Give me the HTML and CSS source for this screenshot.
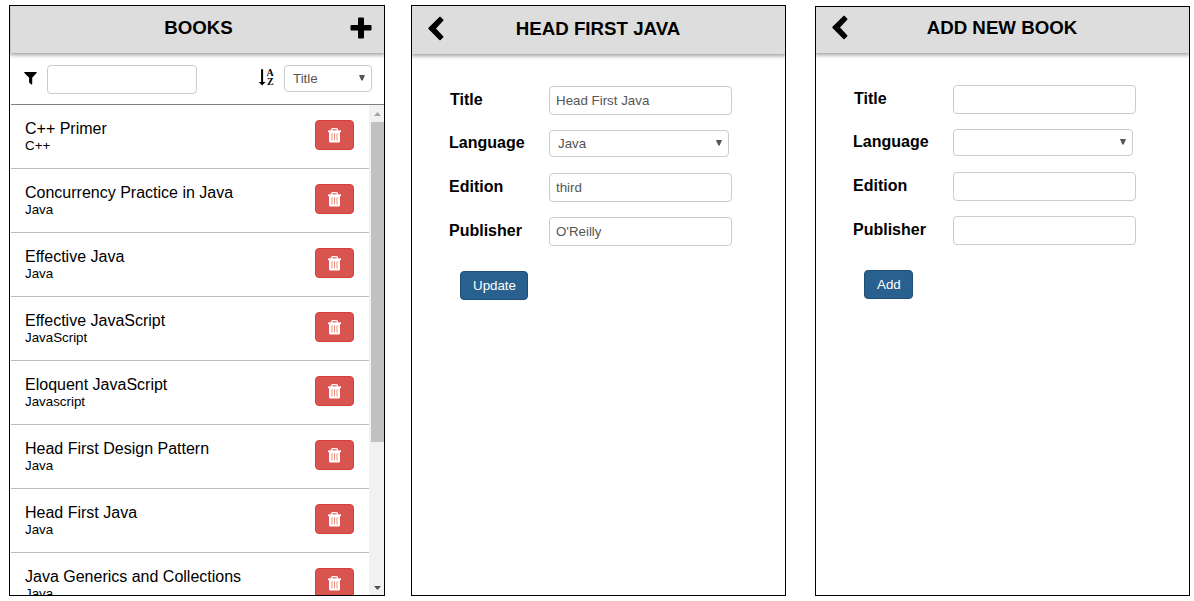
FILE: index.html
```html
<!DOCTYPE html>
<html lang="en">
<head>
<meta charset="utf-8">
<title>Books</title>
<link rel="stylesheet" href="styles.css">
</head>
<body>
<svg class="defs" aria-hidden="true">
  <symbol id="trash" viewBox="0 0 13 15">
    <path d="M3.6 2.6V1.7Q3.6 .7 4.6 .7H8.4Q9.4 .7 9.4 1.7V2.6" fill="none" stroke="#fff" stroke-width="1.3"/>
    <path d="M0 2.3H13V4.2H0z" fill="#fff"/>
    <path d="M1 4H12V13.1Q12 14.6 10.6 14.6H2.4Q1 14.6 1 13.1z" fill="#fff"/>
    <path d="M4 5.2V12.4M6.5 5.2V12.4M9 5.2V12.4" stroke="#e78d7c" stroke-width="1"/>
  </symbol>
  <symbol id="chevron" viewBox="0 0 16 25">
    <path d="M.5 11.8Q0 12.4.5 13L11.4 24Q12 24.6 12.6 24L15.2 21.4Q15.8 20.8 15.2 20.2L8 12.4 15.2 4.7Q15.8 4.1 15.2 3.5L12.6.9Q12 .3 11.4.9z"/>
  </symbol>
  <symbol id="caret" viewBox="0 0 6 6"><path d="M0 0H6L3.7 5.5H2.3z" fill="#555"/></symbol>
</svg>
<main class="screens">
  <section class="phone phone-list">
    <header class="bar">
      <h3 class="bar-title">BOOKS</h3>
      <svg class="plus" viewBox="0 0 22 22"><path d="M8 1.5Q8 .5 9 .5H13Q14 .5 14 1.5V8H20.5Q21.5 8 21.5 9V12.5Q21.5 13.5 20.5 13.5H14V20.5Q14 21.5 13 21.5H9Q8 21.5 8 20.5V13.5H1.5Q.5 13.5.5 12.5V9Q.5 8 1.5 8H8z"/></svg>
    </header>
    <div class="tools">
      <svg class="funnel" viewBox="0 0 13 13"><path d="M.4 0H12.6Q13 .5 12.6 1L8.2 5.8V12.3Q8 12.9 7.4 12.6L5.1 10.4V5.8L.4 1Q0 .5.4 0z"/></svg>
      <input class="field filter" type="text" aria-label="Filter">
      <svg class="sort" viewBox="0 0 16 18"><path d="M2.1 .3H4.1V13H6.5L3.1 16.6 -.2 13H2.1z"/><text x="7.6" y="7.4">A</text><text x="8.1" y="16.4">Z</text></svg>
      <div class="pick pick-sort"><select class="field" aria-label="Sort"><option>Title</option></select><svg class="caret"><use href="#caret"/></svg></div>
    </div>
    <div class="list">
      <ul class="rows">
        <li class="row"><div><div class="name">C++ Primer</div><div class="lang">C++</div></div><button class="delete"><svg class="trash"><use href="#trash"/></svg></button></li>
        <li class="row"><div><div class="name">Concurrency Practice in Java</div><div class="lang">Java</div></div><button class="delete"><svg class="trash"><use href="#trash"/></svg></button></li>
        <li class="row"><div><div class="name">Effective Java</div><div class="lang">Java</div></div><button class="delete"><svg class="trash"><use href="#trash"/></svg></button></li>
        <li class="row"><div><div class="name">Effective JavaScript</div><div class="lang">JavaScript</div></div><button class="delete"><svg class="trash"><use href="#trash"/></svg></button></li>
        <li class="row"><div><div class="name">Eloquent JavaScript</div><div class="lang">Javascript</div></div><button class="delete"><svg class="trash"><use href="#trash"/></svg></button></li>
        <li class="row"><div><div class="name">Head First Design Pattern</div><div class="lang">Java</div></div><button class="delete"><svg class="trash"><use href="#trash"/></svg></button></li>
        <li class="row"><div><div class="name">Head First Java</div><div class="lang">Java</div></div><button class="delete"><svg class="trash"><use href="#trash"/></svg></button></li>
        <li class="row"><div><div class="name">Java Generics and Collections</div><div class="lang">Java</div></div><button class="delete"><svg class="trash"><use href="#trash"/></svg></button></li>
      </ul>
      <div class="scroll">
        <svg class="arrow" viewBox="0 0 15 17"><path d="M5 11H12L8.5 7z" fill="#a3a3a3"/></svg>
        <div class="thumb"></div>
        <svg class="arrow arrow-down" viewBox="0 0 15 17"><path d="M5 8H12L8.5 12z" fill="#505050"/></svg>
      </div>
    </div>
  </section>

  <section class="phone phone-edit">
    <header class="bar">
      <svg class="back"><use href="#chevron"/></svg>
      <h3 class="bar-title">HEAD FIRST JAVA</h3>
    </header>
    <form class="form">
      <label class="line"><span class="label label-title">Title</span><input class="field" type="text" value="Head First Java"></label>
      <label class="line line-pick"><span class="label">Language</span><span class="pick"><select class="field"><option>Java</option></select><svg class="caret"><use href="#caret"/></svg></span></label>
      <label class="line"><span class="label">Edition</span><input class="field" type="text" value="third"></label>
      <label class="line"><span class="label">Publisher</span><input class="field" type="text" value="O'Reilly"></label>
      <button class="submit" type="button">Update</button>
    </form>
  </section>

  <section class="phone phone-add">
    <header class="bar">
      <svg class="back"><use href="#chevron"/></svg>
      <h3 class="bar-title">ADD NEW BOOK</h3>
    </header>
    <form class="form">
      <label class="line"><span class="label label-title">Title</span><input class="field" type="text"></label>
      <label class="line line-pick"><span class="label">Language</span><span class="pick"><select class="field"><option></option></select><svg class="caret"><use href="#caret"/></svg></span></label>
      <label class="line"><span class="label">Edition</span><input class="field" type="text"></label>
      <label class="line"><span class="label">Publisher</span><input class="field" type="text"></label>
      <button class="submit" type="button">Add</button>
    </form>
  </section>
</main>
</body>
</html>
```
FILE: styles.css
```css
* { box-sizing: border-box; }
body { margin: 0; background: #fff; color: #000; font-family: "Liberation Sans", Arial, sans-serif; font-size: 16px; overflow: hidden; }
svg { display: block; flex: none; }
.defs { width: 0; height: 0; position: absolute; }
.screens { display: flex; padding: 5px 0 0 9px; height: 601px; }
.phone { display: flex; flex-direction: column; flex: none; width: 375px; height: 591px; border: 1px solid #000; overflow: hidden; }
.phone-list { width: 376px; padding-left: 1px; }
.phone-edit { margin-left: 26px; }
.phone-add { margin: 1px 0 0 29px; height: 590px; }

.bar { display: flex; align-items: flex-start; flex: none; height: 47px; background: #ddd; box-shadow: 0 1px 4px 1px rgba(0, 0, 0, .38); }
.phone-edit .bar { height: 48px; }
.phone-add .bar { height: 46px; }
.bar-title { flex: 1; margin: 11px 0 0; font-size: 18.72px; line-height: 21px; font-weight: bold; text-align: center; }
.phone-list .bar-title { padding-left: 36px; }
.phone-edit .bar-title { margin-top: 12px; padding-right: 33px; }
.phone-add .bar-title { margin-top: 10px; padding-right: 33px; }
.plus { width: 22px; height: 22px; margin: 11px 12px 0 0; }
.back { width: 16px; height: 25px; margin: 10px 0 0 16px; }
.phone-add .back { margin-top: 8px; }

.field { width: 100%; height: 29px; margin: 0; padding: 0 6px; border: 1px solid #ccc; border-radius: 4px; background: #fff; color: #555; font: 13.33px "Liberation Sans", Arial, sans-serif; outline: none; }
.pick { position: relative; display: block; flex: 1; }
.pick .field { display: block; height: 27px; padding: 0 8px; appearance: none; }
.caret { position: absolute; right: 7px; top: 10px; width: 6px; height: 6px; pointer-events: none; }

.tools { display: flex; align-items: flex-start; flex: none; height: 52px; padding: 12px 12px 0 13px; border-bottom: 1px solid #808080; }
.funnel { width: 13px; height: 13px; margin-top: 7px; }
.filter { width: 150px; margin-left: 10px; }
.sort { width: 16px; height: 18px; margin: 4px 9px 0 auto; overflow: visible; font: bold 10px "Liberation Serif", serif; }
.pick-sort { flex: none; width: 88px; }

.list { display: flex; flex: 1; min-height: 0; }
.rows { flex: 1; margin: 0; padding: 0; list-style: none; overflow: hidden; }
.row { display: flex; justify-content: space-between; align-items: flex-start; height: 64px; padding: 15px 15px 0 14px; border-bottom: 1px solid #bdbdbd; }
.name { line-height: 18px; }
.lang { font-size: 13.33px; line-height: 15px; }
.delete { display: flex; align-items: center; justify-content: center; width: 39px; height: 30px; padding: 0; border: 1px solid #d43f3a; border-radius: 4px; background: #d9534f; }
.trash { width: 13px; height: 15px; }
.scroll { display: flex; flex-direction: column; width: 15px; background: #f1f1f1; }
.arrow { width: 15px; height: 17px; }
.thumb { height: 320px; margin-left: 2px; background: #c1c1c1; }
.arrow-down { margin-top: auto; }

.form { display: flex; flex-direction: column; align-items: flex-start; padding: 32px 0 0 37px; }
.line { display: flex; align-items: flex-start; width: 283px; height: 44px; }
.line-pick { width: 280px; height: 43px; }
.label { flex: none; width: 100px; padding-top: 5px; line-height: 18px; font-weight: bold; }
.label-title { padding-left: 1px; }
.line-pick .label { padding-top: 4px; }
.submit { height: 29px; margin: 10px 0 0 11px; padding: 0 11px 0 12px; border: 1px solid #204d74; border-radius: 4px; background: #286090; color: #fff; font: 13.33px "Liberation Sans", Arial, sans-serif; }
```
